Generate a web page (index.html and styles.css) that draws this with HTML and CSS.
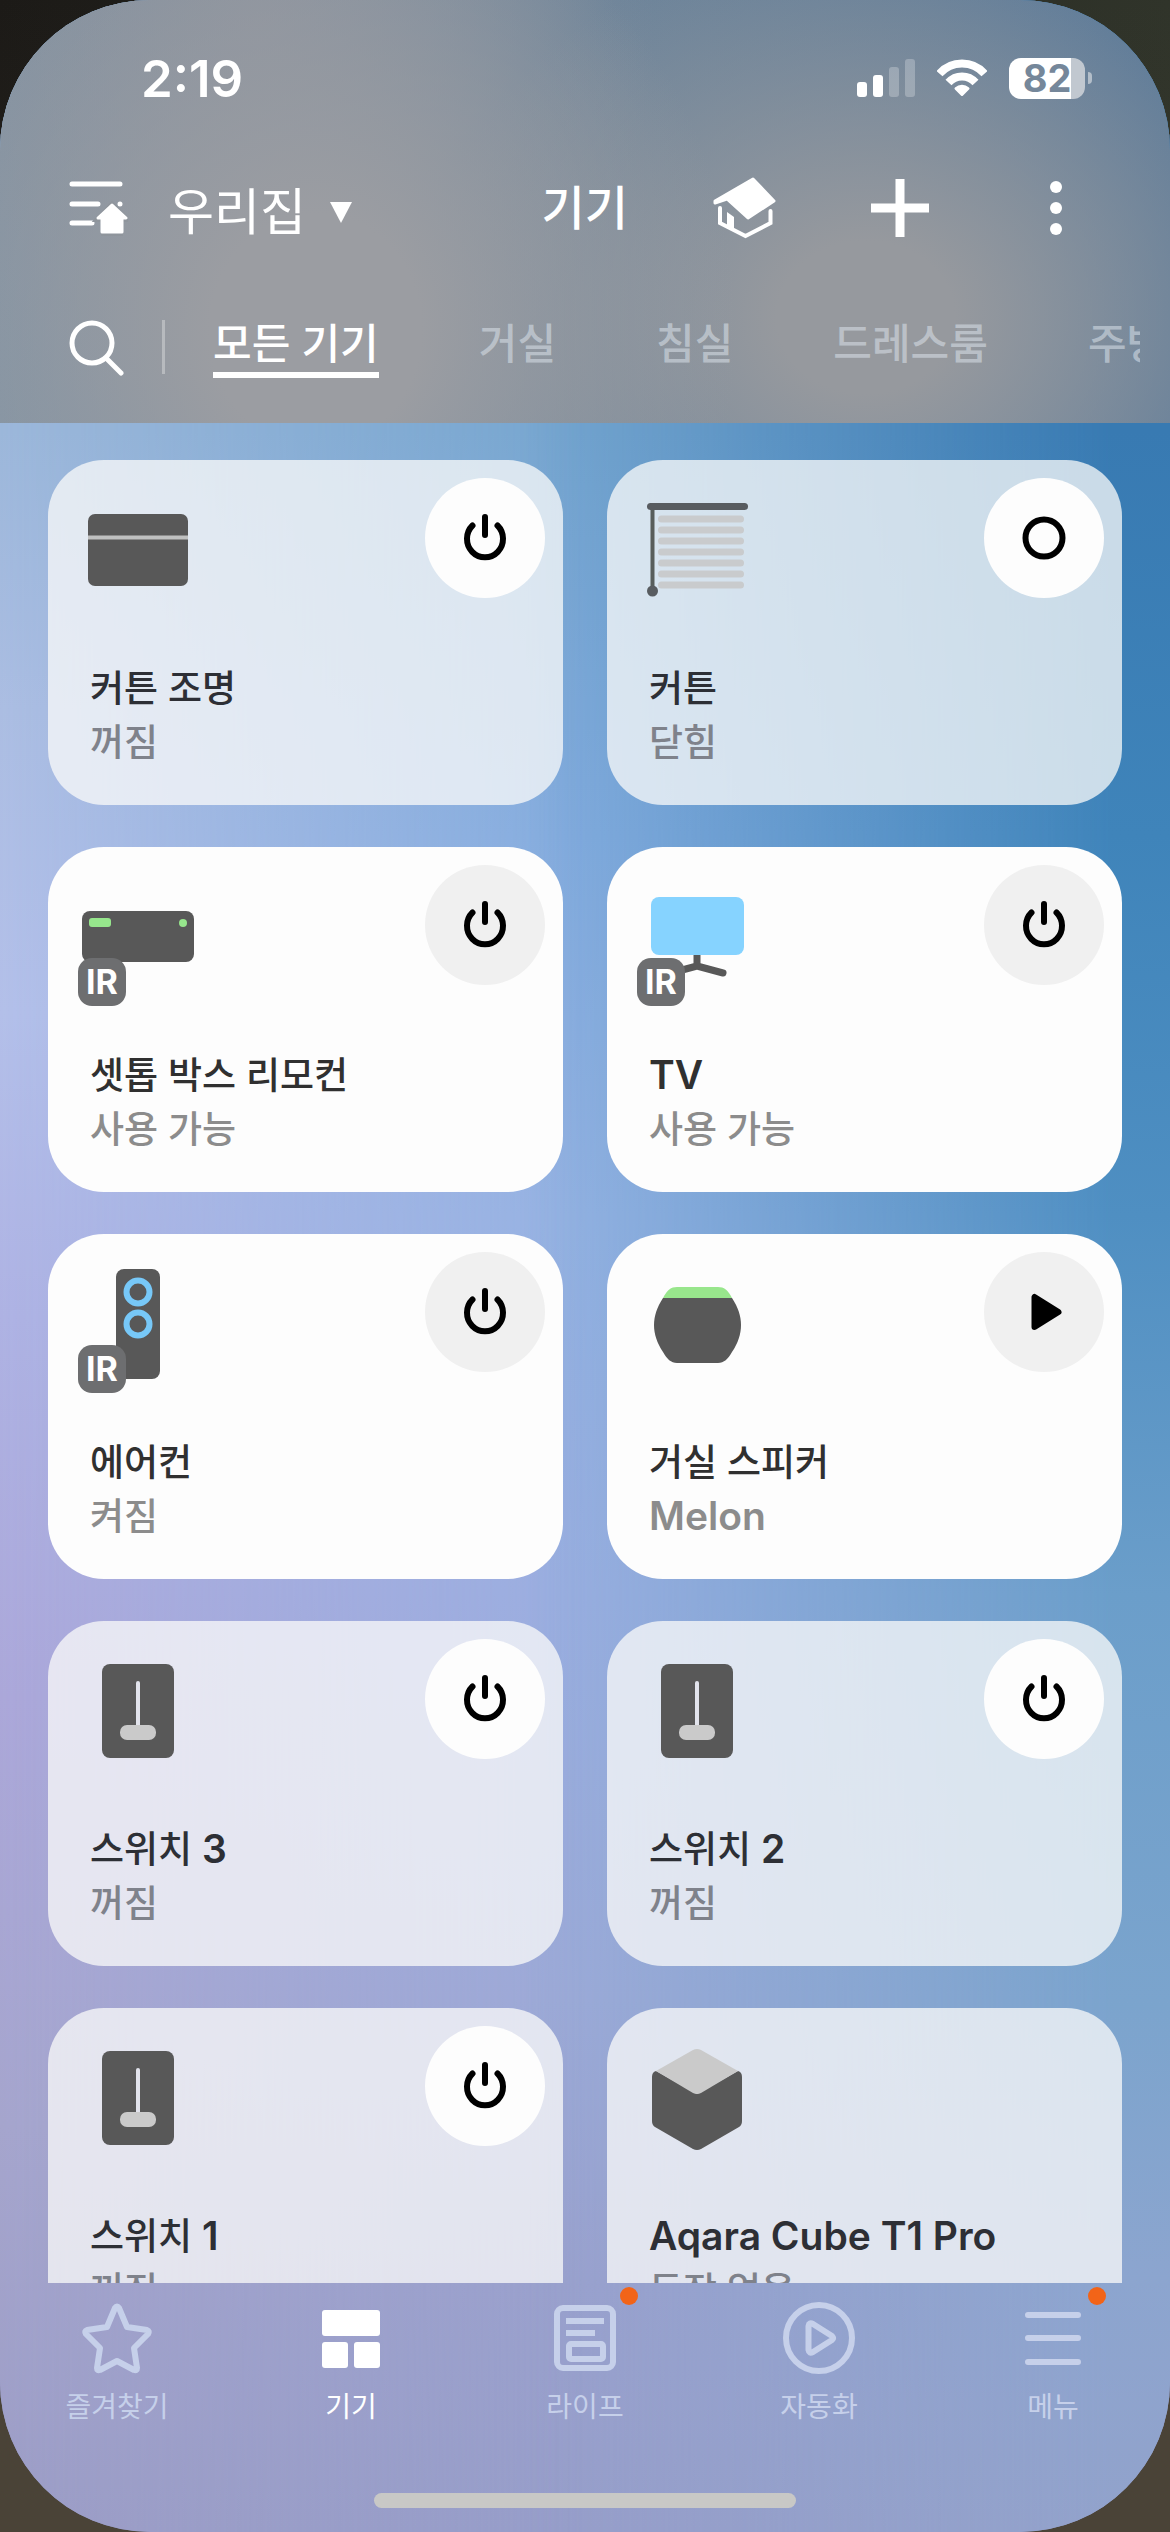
FILE: index.html
```html
<!DOCTYPE html>
<html lang="ko">
<head>
    <meta charset="UTF-8">
    <meta name="viewport" content="width=device-width, initial-scale=1.0">
    <title>기기</title>
    <link rel="stylesheet" href="styles.css">
</head>
<body>
    <svg class="sprite" aria-hidden="true">
        <symbol id="power" viewBox="0 0 60 60">
            <path d="M30 9v18M17.500 17.500A18 18.500 0 1 0 42.500 17.500" fill="none" stroke="#000" stroke-width="6" stroke-linecap="round"/>
        </symbol>
        <symbol id="ring" viewBox="0 0 60 60">
            <circle cx="30" cy="30" r="18.500" fill="none" stroke="#000" stroke-width="6"/>
        </symbol>
        <symbol id="play" viewBox="0 0 60 60">
            <path d="M20.500 15v30L44.500 30z" stroke="#000" stroke-width="6" stroke-linejoin="round"/>
        </symbol>
        <symbol id="switch" viewBox="0 0 120 120">
            <rect x="24" y="13" width="72" height="94" rx="8" fill="#585858"/>
            <path d="M60 32v44" stroke="#e2e3ec" stroke-width="4" stroke-linecap="round"/>
            <rect x="42" y="74" width="36" height="15" rx="7" fill="#cacaca"/>
        </symbol>
    </svg>

    <div class="phone">
        <header class="header">
            <div class="status-bar">
                <span class="time">2:19</span>
                <div class="status-icons">
                    <svg width="58" height="38" viewBox="0 0 58 38" fill="#fff">
                        <rect x="0" y="23" width="10" height="15" rx="3"/>
                        <rect x="16" y="16" width="10" height="22" rx="3"/>
                        <rect x="32" y="8" width="10" height="30" rx="3" opacity=".25"/>
                        <rect x="48" y="0" width="10" height="38" rx="3" opacity=".25"/>
                    </svg>
                    <svg width="50" height="38" viewBox="0 0 50 38" fill="none" stroke="#fff" stroke-width="8">
                        <path d="M2.500 14.700A30 30 0 0 1 47.500 14.700"/>
                        <path d="M11.500 23.500A18 18 0 0 1 38.500 23.500"/>
                        <path d="M25 35.500l-6-6a9 9 0 0 1 12 0z" fill="#fff" stroke-width="3" stroke-linejoin="round"/>
                    </svg>
                    <div class="battery"><span>82</span></div>
                </div>
            </div>

            <div class="top-bar">
                <button class="icon-btn home-list" aria-label="장소 목록">
                    <svg width="60" height="56" viewBox="0 0 60 56" fill="none" stroke="#fff" stroke-width="5" stroke-linecap="round">
                        <path d="M4 4h48M4 24h26M52 24h0M4 43h20"/>
                        <path d="M44 22L62 41H54v14H34V41H26z" fill="#8f959c" stroke="#8f959c" stroke-width="2"/>
                        <path d="M44 25L58 38h-4v14H34V38h-4z" fill="#fff" stroke-width="3" stroke-linejoin="round"/>
                    </svg>
                </button>
                <div class="place">
                    <select aria-label="장소">
                        <option>우리집</option>
                    </select>
                    <svg width="22" height="22" viewBox="0 0 22 22" fill="#fff"><path d="M0 1h22L11 22z"/></svg>
                </div>
                <h1>기기</h1>
                <div class="actions">
                    <button class="icon-btn" aria-label="지도 보기">
                        <svg width="64" height="64" viewBox="0 0 64 64" fill="#fff">
                            <path d="M41 3L62 25 36 42 15 23 3 27V25z" stroke="#fff" stroke-width="3" stroke-linejoin="round"/>
                            <path d="M8 32V47L33.500 60 58.500 47V35" fill="none" stroke="#fff" stroke-width="4" stroke-linecap="round"/>
                            <path d="M15 36l7 5v13l-7-4z"/>
                        </svg>
                    </button>
                    <button class="icon-btn" aria-label="추가">
                        <svg width="64" height="64" viewBox="0 0 64 64" stroke="#fff" stroke-width="9"><path d="M32 3v58M3 32h58"/></svg>
                    </button>
                    <button class="icon-btn" aria-label="더보기">
                        <svg width="64" height="64" viewBox="0 0 64 64" fill="#fff">
                            <circle cx="32" cy="11" r="6"/>
                            <circle cx="32" cy="32" r="6"/>
                            <circle cx="32" cy="53" r="6"/>
                        </svg>
                    </button>
                </div>
            </div>

            <div class="rooms">
                <button class="icon-btn search" aria-label="검색">
                    <svg width="58" height="58" viewBox="0 0 58 58" fill="none" stroke="#fff" stroke-width="5" stroke-linecap="round">
                        <circle cx="24" cy="25" r="20"/>
                        <path d="M38 40l15 15"/>
                    </svg>
                </button>
                <nav class="tabs">
                    <a class="active" href="#all">모든 기기</a>
                    <a href="#living">거실</a>
                    <a href="#bedroom">침실</a>
                    <a href="#dressroom">드레스룸</a>
                    <a href="#kitchen">주방</a>
                </nav>
            </div>
        </header>

        <main class="devices">
            <article class="card">
                <div class="card-top">
                    <div class="device-icon">
                        <svg viewBox="0 0 120 120">
                            <rect x="10" y="24" width="100" height="72" rx="7" fill="#585858"/>
                            <path d="M10 47.500h100" stroke="#bfc0c0" stroke-width="4"/>
                        </svg>
                    </div>
                    <button class="round-btn" aria-label="커튼 조명 전원"><svg><use href="#power"/></svg></button>
                </div>
                <h2>커튼 조명</h2>
                <p>꺼짐</p>
            </article>

            <article class="card">
                <div class="card-top">
                    <div class="device-icon">
                        <svg viewBox="0 0 120 120" fill="none" stroke-linecap="round">
                            <path d="M15.500 18v82" stroke="#585e5c" stroke-width="4"/>
                            <path d="M13.500 16.500h94" stroke="#585c60" stroke-width="7"/>
                            <circle cx="15.500" cy="101" r="5.500" fill="#585c60"/>
                            <path d="M24.500 29h79m-79 11h79m-79 11h79m-79 11h79m-79 11h79m-79 11h79m-79 11h79" stroke="#c9cbcd" stroke-width="7"/>
                        </svg>
                    </div>
                    <button class="round-btn" aria-label="커튼 열기"><svg><use href="#ring"/></svg></button>
                </div>
                <h2>커튼</h2>
                <p>닫힘</p>
            </article>

            <article class="card on">
                <div class="card-top">
                    <div class="device-icon">
                        <svg viewBox="0 0 120 120">
                            <rect x="4" y="34" width="112" height="51" rx="8" fill="#585858"/>
                            <rect x="11" y="41" width="22" height="9" rx="3" fill="#96e68c"/>
                            <circle cx="105" cy="46" r="4" fill="#96e68c"/>
                        </svg>
                        <span class="ir">IR</span>
                    </div>
                    <button class="round-btn" aria-label="셋톱 박스 리모컨 전원"><svg><use href="#power"/></svg></button>
                </div>
                <h2>셋톱 박스 리모컨</h2>
                <p>사용 가능</p>
            </article>

            <article class="card on">
                <div class="card-top">
                    <div class="device-icon">
                        <svg viewBox="0 0 120 120">
                            <path d="M60 76v13L34 96M60 89l26 7" fill="none" stroke="#585858" stroke-width="7" stroke-linecap="round" stroke-linejoin="round"/>
                            <rect x="14" y="20" width="93" height="58" rx="8" fill="#86d3ff"/>
                        </svg>
                        <span class="ir">IR</span>
                    </div>
                    <button class="round-btn" aria-label="TV 전원"><svg><use href="#power"/></svg></button>
                </div>
                <h2><span class="latin">TV</span></h2>
                <p>사용 가능</p>
            </article>

            <article class="card on">
                <div class="card-top">
                    <div class="device-icon">
                        <svg viewBox="0 0 120 120">
                            <rect x="38" y="5" width="44" height="110" rx="8" fill="#585858"/>
                            <circle cx="60" cy="28" r="11.500" fill="none" stroke="#77c8f8" stroke-width="6"/>
                            <circle cx="60" cy="60" r="11.500" fill="none" stroke="#77c8f8" stroke-width="6"/>
                        </svg>
                        <span class="ir">IR</span>
                    </div>
                    <button class="round-btn" aria-label="에어컨 전원"><svg><use href="#power"/></svg></button>
                </div>
                <h2>에어컨</h2>
                <p>켜짐</p>
            </article>

            <article class="card on">
                <div class="card-top">
                    <div class="device-icon">
                        <svg viewBox="0 0 120 120">
                            <path d="M26 34h69C107 52 107 70 95 88 91 95 87 99 81 99H40C34 99 30 95 26 88 14 70 14 52 26 34z" fill="#585858"/>
                            <path d="M26 34C30 26 34 23 40 23h41c6 0 10 3 14 11z" fill="#98e68c"/>
                        </svg>
                    </div>
                    <button class="round-btn" aria-label="거실 스피커 재생"><svg><use href="#play"/></svg></button>
                </div>
                <h2>거실 스피커</h2>
                <p><span class="latin">Melon</span></p>
            </article>

            <article class="card">
                <div class="card-top">
                    <div class="device-icon"><svg><use href="#switch"/></svg></div>
                    <button class="round-btn" aria-label="스위치 3 전원"><svg><use href="#power"/></svg></button>
                </div>
                <h2>스위치 <span class="latin">3</span></h2>
                <p>꺼짐</p>
            </article>

            <article class="card">
                <div class="card-top">
                    <div class="device-icon"><svg><use href="#switch"/></svg></div>
                    <button class="round-btn" aria-label="스위치 2 전원"><svg><use href="#power"/></svg></button>
                </div>
                <h2>스위치 <span class="latin">2</span></h2>
                <p>꺼짐</p>
            </article>

            <article class="card">
                <div class="card-top">
                    <div class="device-icon"><svg><use href="#switch"/></svg></div>
                    <button class="round-btn" aria-label="스위치 1 전원"><svg><use href="#power"/></svg></button>
                </div>
                <h2>스위치 <span class="latin">1</span></h2>
                <p>꺼짐</p>
            </article>

            <article class="card">
                <div class="card-top">
                    <div class="device-icon">
                        <svg viewBox="0 0 120 120">
                            <path d="M19 33L60 56 101 33Q105 34 105 39V83Q105 87 102 89L64 111Q60 113 56 111L18 89Q15 87 15 83V39Q15 34 19 33z" fill="#585858"/>
                            <path d="M19 33L56 12Q60 10 64 12L101 33 64 55Q60 57 56 55z" fill="#cacaca"/>
                        </svg>
                    </div>
                </div>
                <h2><span class="latin">Aqara Cube T1 Pro</span></h2>
                <p>동작 없음</p>
            </article>
        </main>

        <footer class="bottom">
            <nav class="bottom-nav">
                <a href="#favorites">
                    <span class="nav-icon">
                        <svg width="72" height="72" viewBox="0 0 72 72" fill="none" stroke="currentColor" stroke-width="6" stroke-linejoin="round">
                            <path d="M34 6Q36 3 38 6L46 25 66 28Q69 29 67 32L53 46 56 66Q56 69 53 68L36 59 19 68Q16 69 16 66L19 46 5 32Q3 29 6 28L26 25z"/>
                        </svg>
                    </span>
                    즐겨찾기
                </a>
                <a class="active" href="#devices">
                    <span class="nav-icon">
                        <svg width="72" height="72" viewBox="0 0 72 72" fill="currentColor">
                            <rect x="7" y="8" width="58" height="26" rx="3"/>
                            <rect x="7" y="40" width="26" height="26" rx="3"/>
                            <rect x="39" y="40" width="26" height="26" rx="3"/>
                        </svg>
                    </span>
                    기기
                </a>
                <a href="#life">
                    <span class="nav-icon">
                        <svg width="72" height="72" viewBox="0 0 72 72" fill="none" stroke="currentColor" stroke-width="6">
                            <rect x="8" y="6" width="56" height="60" rx="6"/>
                            <path d="M17 19h38M17 31h29"/>
                            <rect x="20" y="42" width="34" height="15" rx="2"/>
                        </svg>
                        <i class="dot"></i>
                    </span>
                    라이프
                </a>
                <a href="#automation">
                    <span class="nav-icon">
                        <svg width="72" height="72" viewBox="0 0 72 72" fill="none" stroke="currentColor" stroke-width="6" stroke-linejoin="round">
                            <circle cx="36" cy="36" r="33"/>
                            <path d="M25.500 24Q26 20 30 22L49 34Q51 36 49 38L30 50Q26 52 25.500 48z"/>
                        </svg>
                    </span>
                    자동화
                </a>
                <a href="#menu">
                    <span class="nav-icon">
                        <svg width="72" height="72" viewBox="0 0 72 72" fill="none" stroke="currentColor" stroke-width="6" stroke-linecap="round">
                            <path d="M11 13h50M11 36h50M11 60h50"/>
                        </svg>
                        <i class="dot"></i>
                    </span>
                    메뉴
                </a>
            </nav>
            <div class="home-indicator"></div>
        </footer>
    </div>
</body>
</html>
```
FILE: styles.css
```css
* {
    box-sizing: border-box;
}
body {
    margin: 0;
    background: linear-gradient(to bottom, transparent, #4a4337 80%), linear-gradient(to right, #1c1a17, #30342a);
    font-family: Inter, "Noto Sans CJK KR", sans-serif;
    color: #fff;
}
h1, h2, p {
    margin: 0;
    font-weight: 500;
}
a {
    color: inherit;
    text-decoration: none;
}
button, select {
    border: none;
    padding: 0;
    background: none;
    color: inherit;
    font-family: inherit;
    cursor: pointer;
}
svg {
    display: block;
}
.sprite {
    display: none;
}

/* wallpaper: centre column colours, with the two sides faded in over them */
.phone {
    position: relative;
    z-index: 0;
    display: flex;
    flex-direction: column;
    height: 100vh;
    border-radius: 150px;
    overflow: hidden;
    background: linear-gradient(to bottom, #76a6d0 17%, #85addf 33%, #96b3e3 48%, #9bafe1 63%, #9daad8 79%, #9aa1ce 90%, #979eca 100%);
}
.phone::before, .phone::after {
    content: "";
    position: absolute;
    inset: 0;
    z-index: -1;
}
.phone::before {
    background: linear-gradient(to bottom, #9cb7da 17%, #abbde2 28%, #b3bfe9 40%, #aeb2e3 52%, #aba7d9 67%, #a5a5cd 84%, #9c9dc6 100%);
    -webkit-mask-image: linear-gradient(to right, #000, transparent 50%);
    mask-image: linear-gradient(to right, #000, transparent 50%);
}
.phone::after {
    background: linear-gradient(to bottom, #387ab2 17%, #3f84ba 33%, #4f8fc2 48%, #6b9eca 63%, #7ba4cd 79%, #8ca5cf 90%, #92a2cb 100%);
    -webkit-mask-image: linear-gradient(to right, transparent 45%, #000 95%);
    mask-image: linear-gradient(to right, transparent 45%, #000 95%);
}

/* header */
.header {
    flex: none;
    background:
        radial-gradient(ellipse 36% 110% at 27% 78%, #9b9da2 25%, transparent),
        radial-gradient(ellipse 38% 90% at 74% 75%, #96999e 20%, transparent),
        radial-gradient(ellipse 34% 100% at 22% 5%, #8c939e, transparent),
        linear-gradient(to right, #8193a4, #6f859a 50%, #5d7b99);
}
.status-bar {
    display: flex;
    justify-content: space-between;
    align-items: center;
    height: 156px;
    padding: 0 78px 0 141px;
}
.time {
    font-size: 51px;
    font-weight: 600;
}
.status-icons {
    display: flex;
    align-items: center;
    gap: 22px;
}
.battery {
    position: relative;
    display: flex;
    align-items: center;
    justify-content: center;
    width: 76px;
    height: 41px;
    margin-right: 7px;
    border-radius: 12px;
    background: linear-gradient(to right, #fff 82%, #c1c8d0 82%);
    color: #75879a;
    font-size: 38px;
    font-weight: 700;
}
.battery::after {
    content: "";
    position: absolute;
    right: -7px;
    width: 4px;
    height: 12px;
    border-radius: 0 4px 4px 0;
    background: #b3bec9;
}
.top-bar {
    display: flex;
    align-items: center;
    height: 104px;
    padding: 0 82px 0 68px;
}
.home-list {
    margin-right: 40px;
}
.place {
    display: flex;
    align-items: center;
    gap: 24px;
    padding-top: 8px;
}
.place select {
    appearance: none;
    font-size: 50px;
    font-weight: 400;
}
h1 {
    margin-left: auto;
    margin-right: 84px;
    font-size: 47px;
    line-height: 56px;
}
.actions {
    display: flex;
    gap: 92px;
}
.rooms {
    display: flex;
    align-items: center;
    padding: 56px 30px 45px 68px;
}
.search {
    margin-right: 36px;
}
.tabs {
    display: flex;
    gap: 100px;
    padding-left: 51px;
    overflow: hidden;
    white-space: nowrap;
    font-size: 42px;
    font-weight: 500;
    line-height: 56px;
    background: linear-gradient(#b7babe, #b7babe) 0 50% / 3px 54px no-repeat;
}
.tabs a {
    border-bottom: 6px solid transparent;
    color: rgba(220, 228, 236, 0.55);
}
.tabs .active {
    border-color: #fff;
    color: #fff;
}

/* device cards */
.devices {
    flex: 1;
    min-height: 0;
    overflow: hidden;
    display: grid;
    grid-template-columns: 1fr 1fr;
    align-content: start;
    gap: 42px 44px;
    padding: 37px 48px 0;
}
.card {
    padding: 18px 18px 35px;
    border-radius: 56px;
    background: rgba(251, 251, 250, 0.75);
    color: #2d2f35;
}
.card.on {
    background: #fdfdfd;
    color: #303030;
}
.card-top {
    display: flex;
    justify-content: space-between;
    align-items: flex-start;
    margin-bottom: 52px;
}
.device-icon {
    position: relative;
    margin: 12px 0 0 12px;
}
.device-icon svg {
    width: 120px;
    height: 120px;
}
.ir {
    position: absolute;
    left: 0;
    top: 81px;
    width: 48px;
    border-radius: 14px;
    background: #6d6e70;
    color: #fff;
    font-size: 34px;
    font-weight: 700;
    line-height: 48px;
    text-align: center;
}
/* keeps rows without a button as tall as the others */
.card-top {
    min-height: 132px;
}
.round-btn {
    display: flex;
    align-items: center;
    justify-content: center;
    width: 120px;
    height: 120px;
    border-radius: 50%;
    background: #fdfdfd;
}
.card.on .round-btn {
    background: #f0f0f0;
}
.round-btn svg {
    width: 60px;
    height: 60px;
}
.card h2, .card p {
    padding-left: 24px;
    font-size: 37px;
    line-height: 54px;
}
.card p {
    color: #7f828b;
}
.card.on p {
    color: #8c8c8c;
}
.card .latin {
    font-size: 39px;
    font-weight: 600;
    line-height: 1;
}

/* bottom navigation */
.bottom {
    flex: none;
    padding: 19px 0 24px;
}
.bottom-nav {
    display: grid;
    grid-template-columns: repeat(5, 1fr);
    margin-bottom: 66px;
}
.bottom-nav a {
    display: flex;
    flex-direction: column;
    align-items: center;
    gap: 13px;
    color: #c6d0ea;
    font-size: 28px;
    line-height: 40px;
}
.bottom-nav .active {
    color: #fff;
}
.nav-icon {
    position: relative;
}
.dot {
    position: absolute;
    right: -17px;
    top: -15px;
    width: 18px;
    height: 18px;
    border-radius: 50%;
    background: #f26418;
}
.home-indicator {
    width: 36%;
    height: 15px;
    margin: 0 auto;
    border-radius: 8px;
    background: #c8c8c6;
}
```
